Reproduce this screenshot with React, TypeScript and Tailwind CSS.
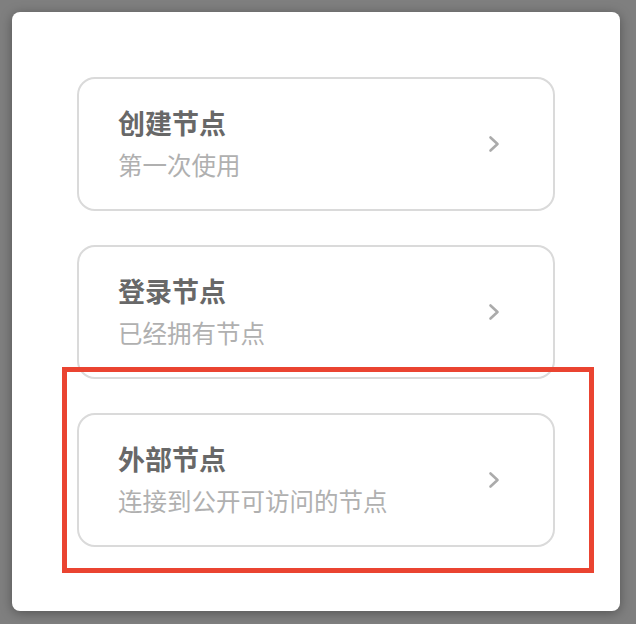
interface NodeOption {
  title: string;
  desc: string;
}

const options: NodeOption[] = [
  { title: "创建节点", desc: "第一次使用" },
  { title: "登录节点", desc: "已经拥有节点" },
  { title: "外部节点", desc: "连接到公开可访问的节点" },
];

function Chevron() {
  return (
    <svg width="14" height="18" viewBox="0 0 14 18" fill="none" className="text-[#ababab]">
      <polyline
        points="3.5,2.5 10.5,9 3.5,15.5"
        stroke="currentColor"
        strokeWidth="2.6"
        strokeLinecap="round"
        strokeLinejoin="round"
      />
    </svg>
  );
}

function OptionCard({ title, desc }: NodeOption) {
  return (
    <button className="flex h-[134px] w-full items-center justify-between rounded-[18px] border-2 border-[#dadada] bg-white pl-[39px] pr-[52px] text-left">
      <div className="-mt-[2px] flex flex-col gap-[12px]">
        <p className="text-[27px] font-bold leading-[31px] text-[#686868]">{title}</p>
        <p className="text-[24.5px] leading-[30px] text-[#b0b0b0]">{desc}</p>
      </div>
      <Chevron />
    </button>
  );
}

export default function App() {
  return (
    <div
      className="min-h-[624px] w-full bg-[#7f7f7f] p-[12px]"
      style={{ fontFamily: '"Noto Sans CJK SC", "Noto Sans", sans-serif' }}
    >
      <div className="relative flex h-[599px] w-[608px] flex-col gap-[34px] rounded-[8px] bg-white px-[65px] pt-[65px] shadow-[0_2px_12px_rgba(0,0,0,0.35)]">
        {options.map((o) => (
          <OptionCard key={o.title} {...o} />
        ))}

        {/* highlight annotation */}
        <div className="pointer-events-none absolute left-[50px] top-[355px] h-[206px] w-[532px] border-[5px] border-[#ea4431]" />
      </div>
    </div>
  );
}
